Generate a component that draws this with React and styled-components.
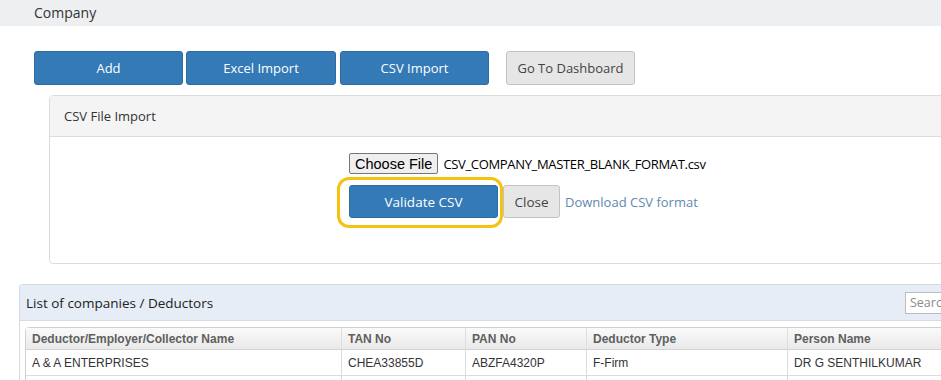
import React from 'react';
import styled, { createGlobalStyle } from 'styled-components';

const UI_FONT = '"Open Sans", "DejaVu Sans", sans-serif';
const TABLE_FONT = '"Liberation Sans", Arial, sans-serif';

const GlobalStyle = createGlobalStyle`
    html, body {
        margin: 0;
        padding: 0;
        background: #fff;
        font-family: ${UI_FONT};
        color: #333;
    }
`;

const Page = styled.div`
    width: 941px;
    height: 380px;
    overflow: hidden;
`;

const TopBar = styled.div`
    height: 26px;
    line-height: 26px;
    padding-left: 34px;
    background: #edeff1;
    font-size: 14px;
    color: #333;
`;

const Toolbar = styled.div`
    display: flex;
    align-items: center;
    margin: 25px 0 0 34px;
`;

const Button = styled.button`
    box-sizing: border-box;
    height: 34px;
    width: ${({ w }) => w}px;
    margin-right: ${({ gap }) => gap || 0}px;
    border-radius: 3px;
    font-family: ${UI_FONT};
    font-size: 13px;
    cursor: pointer;
    ${({ variant }) => variant === 'grey' ? `
        background: #e6e6e6;
        border: 1px solid #c3c3c3;
        color: #444;
    ` : `
        background: #337ab7;
        border: 1px solid #2e6da4;
        color: #fff;
    `}
`;

const Card = styled.div`
    box-sizing: border-box;
    margin: 10px -40px 0 49px;
    height: 169px;
    border: 1px solid #dcdcdc;
    border-radius: 4px;
`;

const CardHeader = styled.div`
    height: 40px;
    line-height: 40px;
    padding-left: 14px;
    background: #f4f4f4;
    border-bottom: 1px solid #dcdcdc;
    font-size: 13px;
    color: #333;
`;

const CardBody = styled.div`
    padding: 16px 0 0 299px;
`;

const FileRow = styled.div`
    display: flex;
    align-items: center;
    height: 21px;
`;

const FileButton = styled.button`
    box-sizing: border-box;
    height: 21px;
    padding: 0 5px;
    background: #efefef;
    border: 1px solid #767676;
    border-radius: 2px;
    font-family: ${TABLE_FONT};
    font-size: 14.5px;
    color: #000;
`;

const FileName = styled.span`
    margin-left: 5px;
    font-family: ${UI_FONT};
    font-size: 13px;
    letter-spacing: -0.33px;
    color: #000;
`;

const ActionRow = styled.div`
    display: flex;
    align-items: center;
    margin-top: 11px;
`;

const Highlight = styled.div`
    position: relative;
    display: flex;
    &::after {
        content: '';
        position: absolute;
        left: -12px;
        right: -5px;
        top: -8px;
        bottom: -10px;
        border: 3px solid #f5c211;
        border-radius: 12px;
        pointer-events: none;
    }
`;

const SmallButton = styled(Button)`
    height: 33px;
    font-size: 13.5px;
`;

const DownloadLink = styled.a`
    margin-left: 5px;
    font-size: 13px;
    color: #6289b0;
    text-decoration: none;
`;

const ListPanel = styled.div`
    margin: 20px -40px 0 19px;
    border: 1px solid #d6dce4;
    border-radius: 3px;
`;

const ListHeader = styled.div`
    display: flex;
    align-items: center;
    justify-content: space-between;
    height: 35px;
    padding-left: 6px;
    background: #e6edf6;
    border-bottom: 1px solid #d6dce4;
    font-size: 13.5px;
    color: #222;
`;

const SearchInput = styled.input`
    box-sizing: border-box;
    width: 75px;
    height: 22px;
    padding: 0 4px;
    border: 1px solid #bdbdbd;
    font-family: ${UI_FONT};
    font-size: 12.5px;
    &::placeholder {
        color: #8a8a8a;
    }
`;

const ListBody = styled.div`
    padding: 6px 0 0 5px;
`;

const Table = styled.table`
    border-collapse: separate;
    border-spacing: 0;
    width: 1000px;
    table-layout: fixed;
    font-family: ${TABLE_FONT};
    font-size: 12px;
    border: 1px solid #cfcfcf;
    border-radius: 4px 4px 0 0;
`;

const Th = styled.th`
    height: 21px;
    padding: 0 6px;
    text-align: left;
    font-weight: bold;
    color: #5f5f5f;
    background: linear-gradient(#fafafa, #e9e9e9);
    border-bottom: 1px solid #d3d3d3;
    border-left: ${({ first }) => first ? 'none' : '1px solid #dedede'};
`;

const Td = styled.td`
    height: 25px;
    padding: 0 6px;
    color: #333;
    border-bottom: 1px solid #dcdcdc;
    border-left: ${({ first }) => first ? 'none' : '1px solid #dcdcdc'};
`;

const columns = [
    { title: 'Deductor/Employer/Collector Name', width: 315 },
    { title: 'TAN No', width: 124 },
    { title: 'PAN No', width: 121 },
    { title: 'Deductor Type', width: 201 },
    { title: 'Person Name', width: 239 },
];

const rows = [
    ['A & A ENTERPRISES', 'CHEA33855D', 'ABZFA4320P', 'F-Firm', 'DR G SENTHILKUMAR'],
    ['', '', '', '', ''],
];

const App = () => (
    <Page>
        <GlobalStyle />
        <TopBar>Company</TopBar>
        <Toolbar>
            <Button w={149} gap={3}>Add</Button>
            <Button w={150} gap={4}>Excel Import</Button>
            <Button w={149} gap={17}>CSV Import</Button>
            <Button w={129} variant="grey">Go To Dashboard</Button>
        </Toolbar>
        <Card>
            <CardHeader>CSV File Import</CardHeader>
            <CardBody>
                <FileRow>
                    <FileButton>Choose File</FileButton>
                    <FileName>CSV_COMPANY_MASTER_BLANK_FORMAT.csv</FileName>
                </FileRow>
                <ActionRow>
                    <Highlight>
                        <SmallButton w={149}>Validate CSV</SmallButton>
                    </Highlight>
                    <SmallButton w={57} variant="grey" style={{ marginLeft: 5 }}>Close</SmallButton>
                    <DownloadLink href="#">Download CSV format</DownloadLink>
                </ActionRow>
            </CardBody>
        </Card>
        <ListPanel>
            <ListHeader>
                List of companies / Deductors
                <SearchInput placeholder="Search" />
            </ListHeader>
            <ListBody>
                <Table>
                    <colgroup>
                        {columns.map(c => <col key={c.title} style={{ width: c.width }} />)}
                    </colgroup>
                    <thead>
                        <tr>
                            {columns.map((c, i) => <Th key={c.title} first={i === 0}>{c.title}</Th>)}
                        </tr>
                    </thead>
                    <tbody>
                        {rows.map((r, ri) => (
                            <tr key={ri}>
                                {r.map((cell, ci) => <Td key={ci} first={ci === 0}>{cell}</Td>)}
                            </tr>
                        ))}
                    </tbody>
                </Table>
            </ListBody>
        </ListPanel>
    </Page>
);

export default App;
